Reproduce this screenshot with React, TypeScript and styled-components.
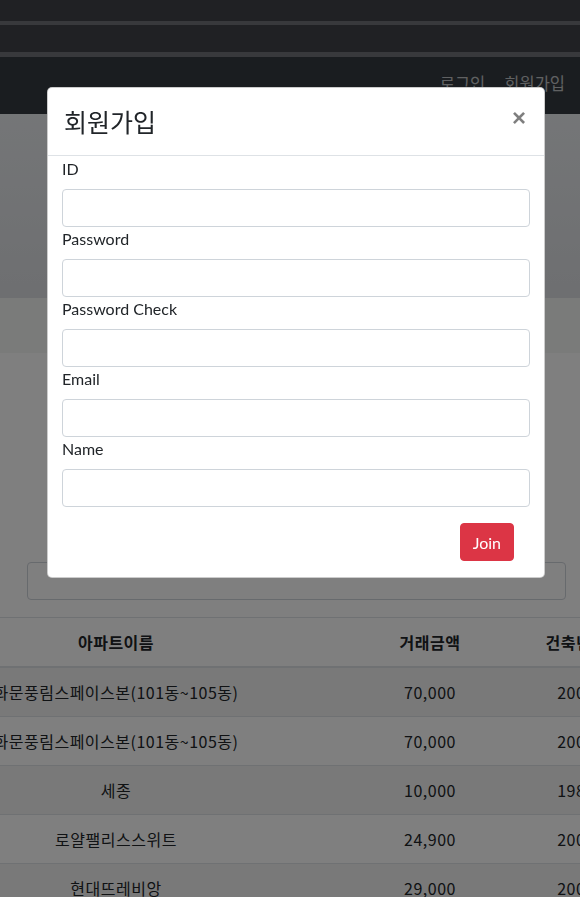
import React from "react";
import styled, { createGlobalStyle } from "styled-components";

const GlobalStyle = createGlobalStyle`
  html, body { margin: 0; padding: 0; }
  body {
    font-family: "Noto Sans CJK KR", sans-serif;
    background: #ffffff;
    color: #212529;
    overflow: hidden;
  }
  * { box-sizing: border-box; }
`;

const Page = styled.div`
  width: 580px;
  height: 897px;
  overflow: hidden;
  display: flex;
  flex-direction: column;
`;

const Strip = styled.div<{ $h: number; $line?: boolean }>`
  height: ${(p) => p.$h}px;
  flex: none;
  background: ${(p) => (p.$line ? "#707278" : "#404248")};
`;

const Navbar = styled.nav`
  height: 57px;
  flex: none;
  background: #343a40;
  display: flex;
  justify-content: flex-end;
  align-items: flex-start;
  padding: 14px 15px 0 0;
`;

const NavLinks = styled.div`
  display: flex;
  gap: 19px;
`;

const NavLink = styled.a`
  font-size: 16.5px;
  line-height: 24px;
  color: #c0c2c4;
  text-decoration: none;
`;

const Jumbotron = styled.div`
  height: 184px;
  flex: none;
  background: linear-gradient(#e9ecef, #dcdee2);
`;

const Band = styled.div`
  height: 55px;
  flex: none;
  background: #f4f6f4;
`;

const SearchArea = styled.div`
  flex: none;
  padding: 209px 14px 17px 27px;
`;

const SearchInput = styled.div`
  height: 38px;
  border: 1px solid #ced4da;
  border-radius: 4px;
  background: #fff;
`;

const TableWrap = styled.div`
  flex: none;
  width: 580px;
  overflow: hidden;
`;

const Table = styled.table`
  margin-left: -125px;
  width: 774px;
  border-collapse: collapse;
  table-layout: fixed;
  font-size: 16px;
  line-height: 24px;
  letter-spacing: 0.5px;
  text-align: center;
  color: #212529;
`;

const Th = styled.th<{ $w: number }>`
  width: ${(p) => p.$w}px;
  padding: 12px 0;
  font-weight: 700;
  white-space: nowrap;
  border-top: 1px solid #dee2e6;
  border-bottom: 2px solid #dee2e6;
`;

const Tr = styled.tr<{ $striped: boolean }>`
  background: ${(p) => (p.$striped ? "rgba(0,0,0,0.05)" : "transparent")};
`;

const Td = styled.td`
  padding: 12px 0;
  white-space: nowrap;
  border-top: 1px solid #dee2e6;
`;

const Backdrop = styled.div`
  position: fixed;
  inset: 0;
  background: rgba(0, 0, 0, 0.5);
`;

const ModalLayer = styled.div`
  position: fixed;
  inset: 0;
  padding: 87px 0 0 47px;
`;

const Dialog = styled.div`
  width: 498px;
  background: #fff;
  border: 1px solid rgba(0, 0, 0, 0.2);
  border-radius: 5px;
  font-family: "Lato", "Noto Sans CJK KR", sans-serif;
`;

const ModalHeader = styled.div`
  display: flex;
  align-items: flex-start;
  justify-content: space-between;
  padding: 15px 16px 16px;
  border-bottom: 1px solid #dee2e6;
`;

const Title = styled.h4`
  margin: 0;
  font-family: "Noto Sans CJK KR", sans-serif;
  font-size: 25px;
  font-weight: 400;
  line-height: 36px;
  color: #212529;
`;

const Close = styled.button`
  border: 0;
  background: transparent;
  padding: 0;
  margin: 3px 2px 0 0;
  font-family: "Liberation Sans", sans-serif;
  font-size: 24px;
  font-weight: 700;
  line-height: 24px;
  color: #000;
  opacity: 0.5;
`;

const ModalBody = styled.div`
  padding: 1px 14px 0;
  display: flex;
  flex-direction: column;
`;

const Label = styled.label`
  display: block;
  font-size: 16px;
  line-height: 24px;
  margin-bottom: 8px;
  color: #212529;
`;

const Input = styled.input`
  display: block;
  width: 100%;
  height: 38px;
  border: 1px solid #ced4da;
  border-radius: 4px;
  padding: 6px 12px;
  font-size: 16px;
  background: #fff;
`;

const ModalFooter = styled.div`
  display: flex;
  justify-content: flex-end;
  padding: 16px 30px 16px;
`;

const Button = styled.button`
  height: 38px;
  padding: 0 12px;
  border: 1px solid #dc3545;
  border-radius: 4px;
  background: #dc3545;
  color: #fff;
  font-family: "Lato", sans-serif;
  font-size: 16px;
`;

const rows = [
  ["화문풍림스페이스본(101동~105동)", "70,000", "2004"],
  ["화문풍림스페이스본(101동~105동)", "70,000", "2004"],
  ["세종", "10,000", "1988"],
  ["로얄팰리스스위트", "24,900", "2003"],
  ["현대뜨레비앙", "29,000", "2001"],
];

const fields = ["ID", "Password", "Password Check", "Email", "Name"];

export default function App() {
  return (
    <>
      <GlobalStyle />
      <Page>
        <Strip $h={21} />
        <Strip $h={4} $line />
        <Strip $h={27} />
        <Strip $h={5} $line />
        <Navbar>
          <NavLinks>
            <NavLink>로그인</NavLink>
            <NavLink>회원가입</NavLink>
          </NavLinks>
        </Navbar>
        <Jumbotron />
        <Band />
        <SearchArea>
          <SearchInput />
        </SearchArea>
        <TableWrap>
          <Table>
            <thead>
              <tr>
                <Th $w={482}>아파트이름</Th>
                <Th $w={146}>거래금액</Th>
                <Th $w={146}>건축년도</Th>
              </tr>
            </thead>
            <tbody>
              {rows.map((r, i) => (
                <Tr key={i} $striped={i % 2 === 0}>
                  <Td>{r[0]}</Td>
                  <Td>{r[1]}</Td>
                  <Td>{r[2]}</Td>
                </Tr>
              ))}
            </tbody>
          </Table>
        </TableWrap>
      </Page>
      <Backdrop />
      <ModalLayer>
        <Dialog>
          <ModalHeader>
            <Title>회원가입</Title>
            <Close>×</Close>
          </ModalHeader>
          <ModalBody>
            {fields.map((f) => (
              <div key={f}>
                <Label>{f}</Label>
                <Input />
              </div>
            ))}
          </ModalBody>
          <ModalFooter>
            <Button>Join</Button>
          </ModalFooter>
        </Dialog>
      </ModalLayer>
    </>
  );
}
